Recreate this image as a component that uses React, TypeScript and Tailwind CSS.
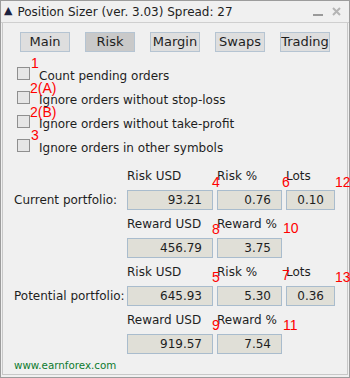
import React from 'react'

const tabs = ['Main', 'Risk', 'Margin', 'Swaps', 'Trading']

const options = [
  'Count pending orders',
  'Ignore orders without stop-loss',
  'Ignore orders without take-profit',
  'Ignore orders in other symbols',
]

// red annotation numbers, placed over the window
const marks: { t: string; x: number; y: number }[] = [
  { t: '1', x: 30, y: 55 },
  { t: '2(A)', x: 29, y: 80 },
  { t: '2(B)', x: 29, y: 104 },
  { t: '3', x: 30, y: 127 },
  { t: '4', x: 211, y: 174 },
  { t: '6', x: 281, y: 174 },
  { t: '12', x: 334, y: 174 },
  { t: '8', x: 211, y: 221 },
  { t: '10', x: 282, y: 220 },
  { t: '5', x: 211, y: 269 },
  { t: '7', x: 281, y: 267 },
  { t: '13', x: 334, y: 269 },
  { t: '9', x: 211, y: 317 },
  { t: '11', x: 282, y: 317 },
]

function Box({ value, w }: { value: string; w: string }) {
  return (
    <div className={`${w} h-[20px] bg-[#e0dfd7] border border-[#a9bccd] flex items-center justify-end pr-[10px]`}>
      {value}
    </div>
  )
}

function Block({ label, risk, riskPct, lots, reward, rewardPct }: {
  label: string; risk: string; riskPct: string; lots: string; reward: string; rewardPct: string
}) {
  return (
    <div className="flex flex-col">
      <div className="h-[28px] flex items-center pl-[124px]">
        <span className="w-[90px]">Risk USD</span>
        <span className="w-[69px]">Risk %</span>
        <span>Lots</span>
      </div>
      <div className="flex items-center h-[20px]">
        <span className="w-[124px] pl-[11px]">{label}</span>
        <div className="flex gap-[4px]">
          <Box value={risk} w="w-[86px]" />
          <Box value={riskPct} w="w-[65px]" />
          <Box value={lots} w="w-[49px]" />
        </div>
      </div>
      <div className="h-[28px] flex items-center pl-[124px]">
        <span className="w-[90px]">Reward USD</span>
        <span>Reward %</span>
      </div>
      <div className="flex items-center h-[20px] pl-[124px] gap-[4px]">
        <Box value={reward} w="w-[86px]" />
        <Box value={rewardPct} w="w-[65px]" />
      </div>
    </div>
  )
}

export default function App() {
  return (
    <div
      className="relative w-[350px] h-[378px] bg-[#f0f0f0] border border-[#9c9c9c] text-[12px] text-[#1e1e1e] flex flex-col"
      style={{ fontFamily: 'Tahoma, "DejaVu Sans", sans-serif' }}
    >
      {/* title bar */}
      <div className="h-[22px] shrink-0 flex items-center border-b border-[#cfcfcf] pl-[3px] pr-[8px]">
        <span className="text-[11px] text-[#1c2340] mr-[5px]">▲</span>
        <span className="flex-1">Position Sizer (ver. 3.03) Spread: 27</span>
        <span className="w-[10px] h-[2px] bg-[#9a9a9a] mt-[6px] mr-[9px]" />
        <svg width="9" height="9" viewBox="0 0 9 9" className="mb-[1px]">
          <path d="M1 1 L8 8 M8 1 L1 8" stroke="#b4b4b4" strokeWidth="2" />
        </svg>
      </div>

      {/* panel */}
      <div className="flex-1 mx-[1px] mb-[2px] border-x border-b border-[#c8c8c8] flex flex-col">
        <div className="flex gap-[15px] pl-[17px] mt-[9px]">
          {tabs.map((t) => (
            <div
              key={t}
              className={`w-[50px] h-[20px] border border-[#b5c4d2] flex items-center justify-center text-[13px] ${
                t === 'Risk' ? 'bg-[#c9c9c9]' : 'bg-[#dedede]'
              }`}
            >
              {t}
            </div>
          ))}
        </div>

        <div className="flex flex-col mt-[12px] pl-[14px]">
          {options.map((o) => (
            <div key={o} className="h-[24px] flex items-center">
              <span className="w-[13px] h-[13px] border border-[#8f8f8f] bg-[#e6e6e6] mr-[9px] mt-[-6px]" />
              <span>{o}</span>
            </div>
          ))}
        </div>

        <div className="mt-[2px] flex flex-col">
          <Block label="Current portfolio:" risk="93.21" riskPct="0.76" lots="0.10" reward="456.79" rewardPct="3.75" />
          <Block label="Potential portfolio:" risk="645.93" riskPct="5.30" lots="0.36" reward="919.57" rewardPct="7.54" />
        </div>

        <div className="mt-[4px] pl-[11px] text-[10.3px] text-[#0d7a2e]">www.earnforex.com</div>
      </div>

      {marks.map((m) => (
        <span
          key={m.t}
          className="absolute text-[14px] leading-none text-[#ff0000]"
          style={{ left: m.x, top: m.y, fontFamily: '"Liberation Sans", Arial, sans-serif' }}
        >
          {m.t}
        </span>
      ))}
    </div>
  )
}
